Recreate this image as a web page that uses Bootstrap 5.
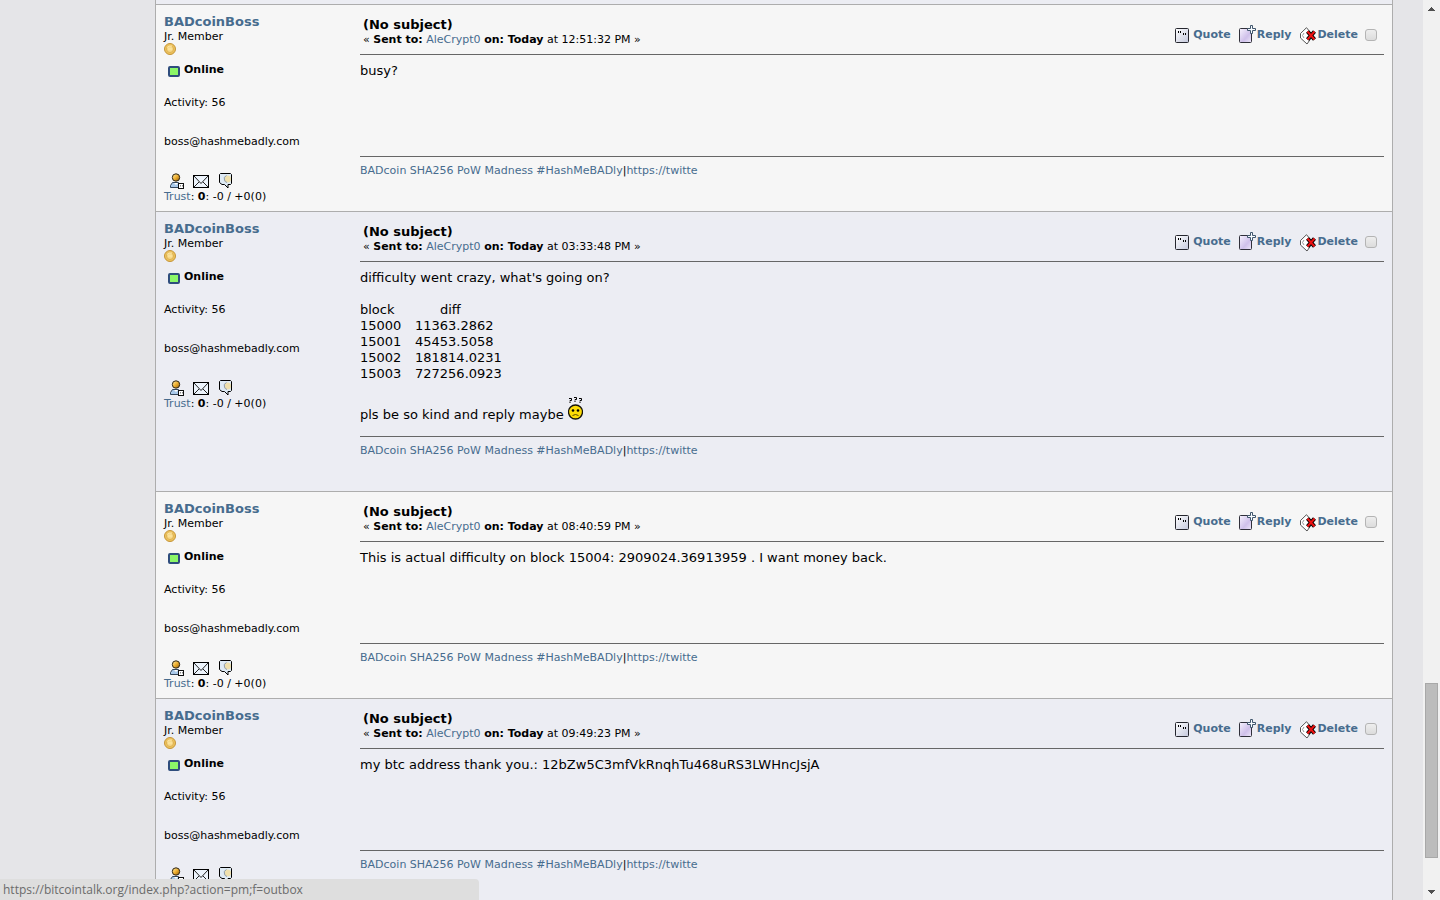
<!DOCTYPE html>
<html lang="en">
<head>
<meta charset="utf-8">
<meta name="viewport" content="width=device-width, initial-scale=1">
<title>Personal Messages - Outbox</title>
<link href="https://cdn.jsdelivr.net/npm/bootstrap@5.3.0/dist/css/bootstrap.min.css" rel="stylesheet">
<style>
body{font-family:Verdana,"DejaVu Sans",sans-serif;font-size:11px;line-height:14px;color:#000;background:#e5e5e8}
a{color:#476c8e;text-decoration:none}
a:hover{text-decoration:underline}
svg{display:block;flex:none}
.page-area{padding:0 30px 0 155px}
.thread{border:1px solid #adadad;border-width:0 1px}
.post{border-top:1px solid #adadad;padding:9px 8px 6px}
.post:nth-child(odd){background:#f6f6f6}
.post:nth-child(even){background:#ecedf3}
.previous-post{height:4px;background:#ecedf3}
.author{width:196px}
.big-text{font-size:13px;line-height:16px}
.rank{line-height:13px}
.coin{margin:0 0 8px}
.status{margin-bottom:19px;padding-left:4px}
.status svg{margin-top:3px}
.activity{margin-bottom:25px}
.email-line{margin-bottom:24px}
.contact{padding-left:5px;gap:8px;margin-bottom:1px}
.post-head{padding:3px 0 7px 3px;border-bottom:1px solid #666}
.actions{padding-top:8px}
.actions a{font-weight:700}
.icon-quote{margin-top:1px}
.icon-reply{margin-bottom:2px}
.icon-delete{margin-top:2px}
.tick{width:12px;height:12px;margin:0 7px 0 7px;appearance:none;border:1px solid #b4b4b4;border-radius:3px;background:linear-gradient(#eee,#dcdcdc)}
.tick:checked{background:#476c8e}
.message{font-size:13px;line-height:16px;min-height:101px;padding:8px 0 13px}
.message p{margin:0 0 16px}
.message p:last-child{margin:0}
.diffs{margin-bottom:15px}
.diffs th,.diffs td{padding:0;font-weight:400}
.diffs th:first-child,.diffs td:first-child{width:55px}
.diffs th:last-child{padding-left:25px}
.smiley{display:inline-block;vertical-align:-1px}
.signature{border-top:1px solid #666;padding-top:7px;min-height:49px}
.scrollbar-track{width:17px;background:#f1f1f1;padding:7px 2px 6px}
.scroll-up{flex:670 0 0px}
.scroll-down{flex:32 0 0px}
.thumb{flex:173 0 0px;width:13px;background:#bcbcbc;border:1px solid #a8a8a8}
.link-hint{left:0;bottom:0;width:479px;height:21px;padding:1px 3px;background:#dedede;border-top-right-radius:4px;color:#6b6b6b;font:12px/20px "Open Sans","Noto Sans",sans-serif}
</style>
</head>
<body>
<svg width="0" height="0" class="position-absolute" aria-hidden="true">
  <defs>
    <linearGradient id="gold" x1="0" y1="0" x2="1" y2="1"><stop offset="0" stop-color="#fff3b0"/><stop offset=".5" stop-color="#f0b030"/><stop offset="1" stop-color="#8c5a08"/></linearGradient>
    <linearGradient id="paper" x1="0" y1="0" x2="1" y2="1"><stop offset="0" stop-color="#fff"/><stop offset="1" stop-color="#c4c8dc"/></linearGradient>
    <linearGradient id="lilac" x1="0" y1="0" x2="1" y2="1"><stop offset="0" stop-color="#f8f4ff"/><stop offset=".6" stop-color="#cfc0ea"/><stop offset="1" stop-color="#eee8fa"/></linearGradient>
  </defs>
  <symbol id="i-coin" viewBox="0 0 12 12"><circle cx="6" cy="6" r="5.5" fill="#eec45c" stroke="#c4943a"/><circle cx="6" cy="6" r="3.5" fill="#f6d98a" stroke="#dfb050"/><path d="M3 4.5 5 3h3M4 6h4" stroke="#ffe9a8" fill="none"/></symbol>
  <symbol id="i-on" viewBox="0 0 12 11"><rect x="1" y="1" width="10" height="9" rx="1" fill="#8cf768" stroke="#2f4d7d" stroke-width="2"/></symbol>
  <symbol id="i-user" viewBox="0 0 16 16"><path d="M1.5 14.5v-2l2-3h6l3 3v2z" fill="#a9c9ea" stroke="#33465c"/><path d="M5 10l2 2 2-2" fill="#fff"/><circle cx="7" cy="4.500" r="3.700" fill="url(#gold)" stroke="#2c2417"/><rect x="9.500" y="10.500" width="5" height="5" fill="#fff" stroke="#111"/><path d="M11.500 12v1.500m2-1.500v1.500" stroke="#888"/></symbol>
  <symbol id="i-mail" viewBox="0 0 16 16"><rect x=".5" y="2.500" width="15" height="12" fill="#edf4fc" stroke="#000"/><path d="M1 3l7 7.500L15 3M1 14l5-5m4 0 5 5" fill="none" stroke="#222"/></symbol>
  <symbol id="i-talk" viewBox="0 0 16 16"><path d="M3.500.5h10l1 1v9l-1 1H11v3.500L7.500 11.500H5L2.500 9.500v-8z" fill="#dfebf5" stroke="#000"/><circle cx="10.500" cy="6" r="3.500" fill="#efe0ad"/><path d="M9.500 2.500Q6 4 7.500 7q.5 2 2.500 2.500" fill="none" stroke="#8c9cb0"/></symbol>
  <symbol id="i-quote" viewBox="0 0 14 15"><rect x=".5" y=".5" width="13" height="14" rx="1" fill="url(#paper)" stroke="#25262e"/><path d="M3.500 3v2M5.500 3v2M8.500 5v2M10.500 5v2" stroke="#000"/></symbol>
  <symbol id="i-reply" viewBox="0 0 18 18"><rect x=".5" y="3.500" width="12" height="14" rx="1" fill="url(#lilac)" stroke="#30303a"/><path d="M11.500.5h2v3h3v2h-3v3h-2v-3h-3v-2h3z" fill="#f8fcff" stroke="#40566d"/></symbol>
  <symbol id="i-delete" viewBox="0 0 18 18"><path d="M1.500 6.500 7.500.7l6.500 7.800-6 8.500-6.500-6z" fill="#fff" stroke="#555"/><path d="M5 6 3.500 8.500 5 11" fill="none" stroke="#999"/><path d="M8.500 4.500l7 8m0-8-7 8" stroke="#000" stroke-width="4"/><path d="M8.500 4.500l7 8m0-8-7 8" stroke="#e11" stroke-width="2"/></symbol>
  <symbol id="i-huh" viewBox="0 0 15 23"><path d="M1 1.500h2.500v2H2v1M6 .5h2.500v2H7v1M11 1.500h2.500v2H12v1M1.500 5.500h1M6.500 4.500h1M11.500 5.500h1" fill="none" stroke="#000"/><circle cx="7.500" cy="15" r="7" fill="#fcdc06" stroke="#16140a" stroke-width="1.300"/><circle cx="5" cy="13.500" r="1.300"/><circle cx="10" cy="13.500" r="1.300"/><path d="M4.500 18.500q3-2 6 0" fill="none" stroke="#5a4500"/></symbol>
</svg>

<div class="d-flex vh-100 overflow-hidden">
  <main class="page-area flex-grow-1">
    <div class="thread">
      <div class="previous-post"></div>
    </div>
    <div class="thread" id="thread"></div>
  </main>
  <div class="scrollbar-track d-flex flex-column align-items-center" aria-hidden="true">
    <svg width="7" height="4"><path d="M3 0h1v1h1v1h1v1h1v1H0V3h1V2h1V1h1z" fill="#505050"/></svg>
    <div class="scroll-up"></div><div class="thumb"></div><div class="scroll-down"></div>
    <svg width="7" height="4"><path d="M0 0h7v1H6v1H5v1H4v1H3V3H2V2H1V1H0z" fill="#505050"/></svg>
  </div>
</div>
<div class="link-hint position-fixed">https://bitcointalk.org/index.php?action=pm;f=outbox</div>

<template id="post">
  <article class="post d-flex">
    <div class="author flex-shrink-0">
      <a href="#" class="big-text fw-bold d-block">BADcoinBoss</a>
      <div class="rank">Jr. Member</div>
      <svg class="coin" width="12" height="12"><use href="#i-coin"/></svg>
      <div class="status d-flex gap-1"><svg width="12" height="11"><use href="#i-on"/></svg><b>Online</b></div>
      <div class="activity">Activity: 56</div>
      <div class="email-line">boss@hashmebadly.com</div>
      <div class="contact d-flex">
        <a href="#" aria-label="Profile"><svg width="16" height="16"><use href="#i-user"/></svg></a>
        <a href="#" aria-label="Email"><svg width="16" height="16"><use href="#i-mail"/></svg></a>
        <a href="#" aria-label="Message"><svg width="16" height="16"><use href="#i-talk"/></svg></a>
      </div>
      <div><a href="#">Trust</a>: <b>0</b>: -0 / +0(0)</div>
    </div>
    <div class="flex-grow-1">
      <header class="post-head d-flex justify-content-between">
        <div>
          <div class="big-text fw-bold">(No subject)</div>
          <div>« <b>Sent to:</b> <a href="#">AleCrypt0</a> <b>on: Today</b> at <time></time> »</div>
        </div>
        <div class="actions d-flex align-items-center align-self-start">
          <a href="#" class="d-flex align-items-center gap-1"><svg width="14" height="15" class="icon-quote"><use href="#i-quote"/></svg>Quote</a>
          <a href="#" class="d-flex align-items-center ms-2"><svg width="18" height="18" class="icon-reply"><use href="#i-reply"/></svg>Reply</a>
          <a href="#" class="d-flex align-items-center ms-2"><svg width="18" height="18" class="icon-delete"><use href="#i-delete"/></svg>Delete</a>
          <input type="checkbox" class="tick" aria-label="Select message">
        </div>
      </header>
      <div class="message"></div>
      <footer class="signature"><a href="#">BADcoin SHA256 PoW Madness #HashMeBADly</a>|<a href="#">https://twitte</a></footer>
    </div>
  </article>
</template>

<script src="https://cdn.jsdelivr.net/npm/bootstrap@5.3.0/dist/js/bootstrap.bundle.min.js"></script>
<script>
const posts = [
  ['12:51:32 PM', '<p>busy?</p>'],
  ['03:33:48 PM', `<p>difficulty went crazy, what's going on?</p>
    <table class="diffs"><thead><tr><th>block</th><th>diff</th></tr></thead><tbody>
    <tr><td>15000</td><td>11363.2862</td></tr><tr><td>15001</td><td>45453.5058</td></tr>
    <tr><td>15002</td><td>181814.0231</td></tr><tr><td>15003</td><td>727256.0923</td></tr></tbody></table>
    <p>pls be so kind and reply maybe <svg class="smiley" width="15" height="23" role="img" aria-label="Huh"><use href="#i-huh"/></svg></p>`],
  ['08:40:59 PM', '<p>This is actual difficulty on block 15004: 2909024.36913959 . I want money back.</p>'],
  ['09:49:23 PM', '<p>my btc address thank you.: 12bZw5C3mfVkRnqhTu468uRS3LWHncJsjA</p>']
];
const thread = document.getElementById('thread');
const template = document.getElementById('post');
for (const [time, body] of posts) {
  const node = template.content.cloneNode(true);
  node.querySelector('time').textContent = time;
  node.querySelector('.message').innerHTML = body;
  thread.append(node);
}
</script>
</body>
</html>
